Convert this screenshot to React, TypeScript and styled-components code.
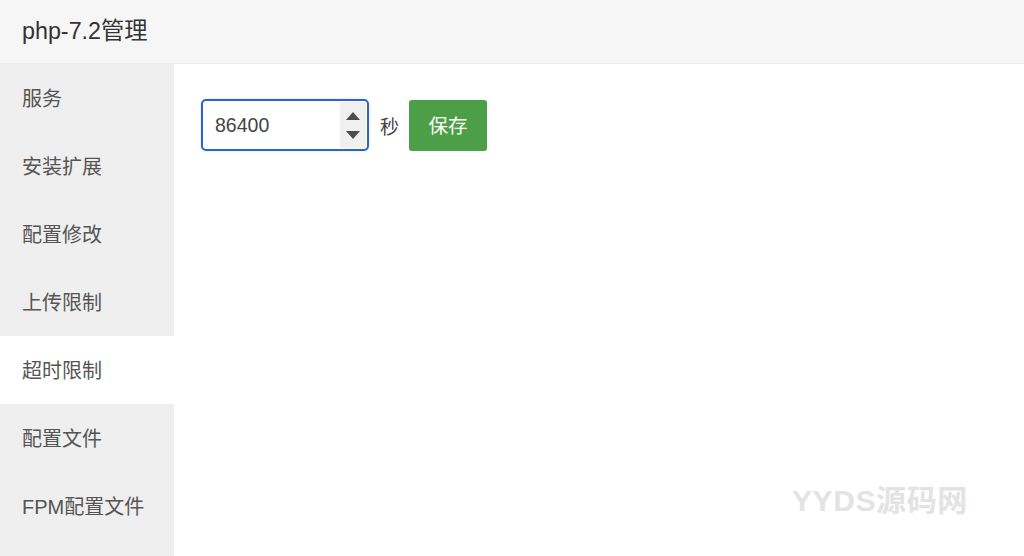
import React from 'react';
import styled, { createGlobalStyle } from 'styled-components';

const GlobalStyle = createGlobalStyle`
    html, body {
        margin: 0;
        padding: 0;
        background: #fff;
        font-family: 'Liberation Sans', 'Noto Sans CJK SC', sans-serif;
    }
`;

const Page = styled.div`
    width: 1024px;
    height: 556px;
    display: flex;
    flex-direction: column;
    overflow: hidden;
    position: relative;
`;

const Header = styled.div`
    height: 64px;
    flex-shrink: 0;
    display: flex;
    align-items: center;
    padding-left: 22px;
    padding-bottom: 6px;
    box-sizing: border-box;
    background: #f6f6f6;
    border-bottom: 1px solid #ebebeb;
    font-size: 23.3px;
    color: #333;
`;

const Body = styled.div`
    flex: 1;
    display: flex;
`;

const Sidebar = styled.div`
    width: 174px;
    background: #efefef;
    display: flex;
    flex-direction: column;
`;

const NavItem = styled.div<{ active?: boolean }>`
    height: 68px;
    display: flex;
    align-items: center;
    padding-left: 22px;
    padding-bottom: 2px;
    box-sizing: border-box;
    font-size: 20px;
    color: #555;
    background: ${(p) => (p.active ? '#fff' : 'transparent')};
`;

const Content = styled.div`
    flex: 1;
    padding: 35px 0 0 27px;
`;

const Row = styled.div`
    display: flex;
    align-items: center;
`;

const NumberBox = styled.div`
    width: 168px;
    height: 52px;
    box-sizing: border-box;
    border: 2px solid #2e63c8;
    border-radius: 5px;
    display: flex;
    overflow: hidden;
    box-shadow: 0 0 2px rgba(46, 99, 200, 0.3);
`;

const NumberInput = styled.input`
    flex: 1;
    min-width: 0;
    border: none;
    outline: none;
    padding: 0 0 0 12px;
    font-family: inherit;
    font-size: 19.5px;
    color: #444;
    background: transparent;
`;

const Spinner = styled.div`
    width: 26px;
    margin: 1px 1px 1px 0;
    background: #f0f0f0;
    display: flex;
    flex-direction: column;
    align-items: center;
    justify-content: space-around;
    padding: 4px 0;
`;

const Arrow = styled.span<{ down?: boolean }>`
    width: 0;
    height: 0;
    border-left: 7px solid transparent;
    border-right: 7px solid transparent;
    ${(p) =>
        p.down
            ? 'border-top: 8px solid #4d4d4d;'
            : 'border-bottom: 8px solid #4d4d4d;'}
`;

const Unit = styled.span`
    margin: 0 10px 0 11px;
    font-size: 19px;
    color: #444;
`;

const SaveButton = styled.button`
    width: 78px;
    height: 51px;
    border: none;
    border-radius: 3px;
    background: #4c9f47;
    color: #fff;
    font-family: inherit;
    font-size: 19.5px;
    padding: 0 0 2px;
`;

const Watermark = styled.div`
    position: absolute;
    left: 792px;
    top: 476px;
    font-size: 30px;
    font-weight: bold;
    color: #e3e3e3;
    letter-spacing: 0.6px;
`;

const items = ['服务', '安装扩展', '配置修改', '上传限制', '超时限制', '配置文件', 'FPM配置文件'];

export default function App() {
    return (
        <Page>
            <GlobalStyle />
            <Header>php-7.2管理</Header>
            <Body>
                <Sidebar>
                    {items.map((label) => (
                        <NavItem key={label} active={label === '超时限制'}>
                            {label}
                        </NavItem>
                    ))}
                </Sidebar>
                <Content>
                    <Row>
                        <NumberBox>
                            <NumberInput type="text" defaultValue="86400" />
                            <Spinner>
                                <Arrow />
                                <Arrow down />
                            </Spinner>
                        </NumberBox>
                        <Unit>秒</Unit>
                        <SaveButton>保存</SaveButton>
                    </Row>
                </Content>
            </Body>
            <Watermark>YYDS源码网</Watermark>
        </Page>
    );
}
